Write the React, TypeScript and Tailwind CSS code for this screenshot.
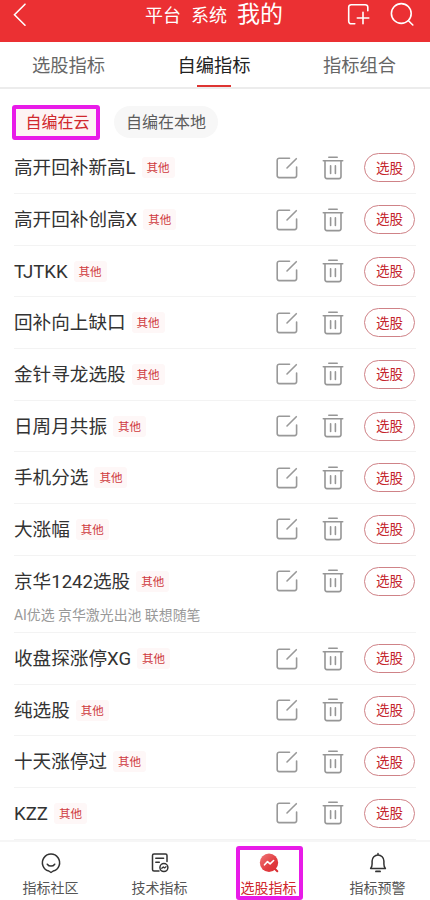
import { useState } from 'react';

const tabs = ['选股指标', '自编指标', '指标组合'];

const indicators = [
  { name: '高开回补新高L' },
  { name: '高开回补创高X' },
  { name: 'TJTKK' },
  { name: '回补向上缺口' },
  { name: '金针寻龙选股' },
  { name: '日周月共振' },
  { name: '手机分选' },
  { name: '大涨幅' },
  { name: '京华1242选股', note: 'AI优选 京华激光出池 联想随笔' },
  { name: '收盘探涨停XG' },
  { name: '纯选股' },
  { name: '十天涨停过' },
  { name: 'KZZ' },
];

function EditIcon() {
  return (
    <svg width="22" height="22" viewBox="0 0 22 22" fill="none" stroke="#999" strokeWidth="1.6" strokeLinecap="round">
      <path d="M13.5 1.2H3.2a2 2 0 0 0-2 2v15.4a2 2 0 0 0 2 2h15.4a2 2 0 0 0 2-2V10" />
      <path d="M20.3 1.7 11 11" />
    </svg>
  );
}

function TrashIcon() {
  return (
    <svg width="22" height="24" viewBox="0 0 22 24" fill="none" stroke="#969696" strokeWidth="1.6" strokeLinecap="round">
      <path d="M6.8 1.2h8.4M1.3 4.7h19.4" />
      <path d="M3 5v15.6a2 2 0 0 0 2 2h12a2 2 0 0 0 2-2V5" />
      <path d="M8.6 9.8v7.6M13.4 9.8v7.6" />
    </svg>
  );
}

function CommunityIcon() {
  return (
    <svg width="22" height="22" viewBox="0 0 22 22" fill="none" stroke="#333" strokeWidth="1.5" strokeLinecap="round" strokeLinejoin="round">
      <path d="M8.8 19A8.6 8.6 0 1 1 13.2 19L11 20.5z" />
      <path d="M7.3 12.2c1.8 2.5 5.6 2.5 7.4 0" />
    </svg>
  );
}

function TechIcon() {
  return (
    <svg width="22" height="22" viewBox="0 0 22 22" fill="none" stroke="#333" strokeWidth="1.5" strokeLinecap="round" strokeLinejoin="round">
      <path d="M18 9.5V3.6a1.5 1.5 0 0 0-1.5-1.5H5a1.5 1.5 0 0 0-1.5 1.5v14A1.5 1.5 0 0 0 5 19.1h5" />
      <path d="M6.8 6.2h7.8M6.8 10.2h3.5" />
      <circle cx="14.9" cy="15.6" r="4" />
      <path d="m12.8 16.3 1.5-1.4 1.2 1 1.5-1.2" strokeWidth="1.3" />
    </svg>
  );
}

function PickIcon() {
  return (
    <svg width="22" height="22" viewBox="0 0 22 22" fill="none" strokeLinecap="round" strokeLinejoin="round">
      <defs>
        <linearGradient id="pick" x1="0" y1="0" x2="1" y2="1">
          <stop offset="0" stopColor="#f0787a" />
          <stop offset="0.6" stopColor="#e13c40" />
          <stop offset="1" stopColor="#d92f34" />
        </linearGradient>
      </defs>
      <path d="m16 16 3.3 3.3" stroke="#d92f34" strokeWidth="2" />
      <circle cx="11" cy="10.8" r="9.2" fill="url(#pick)" />
      <path d="m6.5 12.8 3-3.2 2.6 2.2 3.5-3.3" stroke="#fff" strokeWidth="1.6" />
    </svg>
  );
}

function BellIcon() {
  return (
    <svg width="22" height="22" viewBox="0 0 22 22" fill="none" stroke="#333" strokeWidth="1.5" strokeLinecap="round" strokeLinejoin="round">
      <path d="M11 1.6v1.2M3.6 16.6c1.1-1.3 1.5-2.4 1.5-4.6V9a5.9 5.9 0 0 1 11.8 0v3c0 2.2.4 3.3 1.5 4.6z" />
      <path d="M9 19.4h4" strokeWidth="1.9" />
    </svg>
  );
}

const navItems = [
  { label: '指标社区', icon: CommunityIcon },
  { label: '技术指标', icon: TechIcon },
  { label: '选股指标', icon: PickIcon },
  { label: '指标预警', icon: BellIcon },
];

export default function App() {
  const [tab, setTab] = useState('自编指标');
  const [nav, setNav] = useState('选股指标');

  return (
    <div className="relative flex h-[900px] w-[430px] flex-col overflow-hidden bg-white font-[Roboto,'Noto_Sans_CJK_SC',sans-serif] text-[#333]">
      {/* HEADER */}
      <header className="flex h-[42px] shrink-0 bg-[#eb3033] text-white">
        <button className="h-7 w-[145px] pl-3">
          <svg width="16" height="26" viewBox="0 0 16 26" fill="none" stroke="#fff" strokeWidth="1.6" strokeLinecap="round">
            <path d="M13 3.2 2.5 13.7 13 24.2" />
          </svg>
        </button>
        <div className="flex h-[31px] items-center gap-[10px] whitespace-nowrap text-[18px]">
          <span>平台</span>
          <span>系统</span>
          <span className="text-[23px]">我的</span>
        </div>
        <div className="ml-auto flex h-7 items-center gap-[20px] pr-[16px]">
          <svg width="24" height="24" viewBox="0 0 24 24" fill="none" stroke="#fff" strokeWidth="1.6" strokeLinecap="round">
            <path d="M8.8 21.8H5.2a2.5 2.5 0 0 1-2.5-2.5V5.2a2.5 2.5 0 0 1 2.5-2.5h14.1a2.5 2.5 0 0 1 2.5 2.5v3.6" />
            <path d="M11.3 16h11.5M17 10.3v11.5" />
          </svg>
          <svg width="24" height="24" viewBox="0 0 24 24" fill="none" stroke="#fff" strokeWidth="1.6" strokeLinecap="round">
            <circle cx="11.3" cy="11.5" r="9.9" />
            <path d="m18.5 18.8 4.3 4.2" />
          </svg>
        </div>
      </header>

      {/* TABS */}
      <div className="flex h-[47px] shrink-0 justify-between border-b-2 border-[#ececec] pl-8 pr-[34px]">
        {tabs.map(t => (
          <button
            key={t}
            onClick={() => setTab(t)}
            className={`flex flex-col items-center text-[18.3px] leading-[47px] ${tab === t ? 'text-[#222]' : 'text-[#666]'}`}
          >
            <span className="h-[43px]">{t}</span>
            {tab === t && <span className="h-[2.5px] w-[34px] bg-[#de3432]" />}
          </button>
        ))}
      </div>

      {/* SOURCE */}
      <div className="flex h-[53.4px] shrink-0 items-start gap-[14px] pl-3 pt-4 text-[16px]">
        <button className="flex h-[35px] w-[88px] items-center justify-center rounded-[3px] border-4 border-[#e81be8] bg-[#fdf4f4] pl-[3px] text-[#d0282d]">
          自编在云
        </button>
        <button className="mt-px flex h-8 w-[104px] items-center justify-center rounded-full bg-[#f7f7f7] pt-px text-[#5c5c5c]">
          自编在本地
        </button>
      </div>

      {/* LIST */}
      <div className="flex-1 overflow-hidden px-[14px]">
        {indicators.map(item => (
          <div key={item.name} className={`border-b border-[#f3f3f3] ${item.note ? 'h-[77.5px]' : 'h-[51.65px]'}`}>
            <div className="flex h-[51px] items-center">
              <span className="pt-px text-[18.6px] leading-6">{item.name}</span>
              <span className="ml-[6px] rounded-[3px] bg-[#fef7f7] px-[5px] pt-px text-[11.5px] leading-[20px] text-[#cf3a3e]">其他</span>
              <div className="ml-auto flex items-center pr-px">
                <EditIcon />
                <span className="ml-6 mr-[20px]">
                  <TrashIcon />
                </span>
                <button className="h-[29px] w-[51px] rounded-full border border-[#cf8287] text-[13.5px] text-[#c4242b]">选股</button>
              </div>
            </div>
            {item.note && <p className="-mt-[4px] text-[13.9px] leading-6 text-[#999]">{item.note}</p>}
          </div>
        ))}
      </div>

      {/* BOTTOM NAV */}
      <nav className="-ml-1 grid h-[60px] w-[436px] shrink-0 grid-cols-4 border-t-2 border-[#f6f6f6] bg-white">
        {navItems.map(({ label, icon: Icon }) => (
          <button
            key={label}
            onClick={() => setNav(label)}
            className={`relative flex flex-col items-center pt-[10px] text-[14px] leading-[28px] ${nav === label ? 'text-[#d0282d]' : 'text-[#555]'}`}
          >
            <Icon />
            <span>{label}</span>
            {nav === label && (
              <span className="absolute left-[22px] top-1 h-[54px] w-[67px] rounded-[3px] border-4 border-[#e81be8]" />
            )}
          </button>
        ))}
      </nav>
    </div>
  );
}
